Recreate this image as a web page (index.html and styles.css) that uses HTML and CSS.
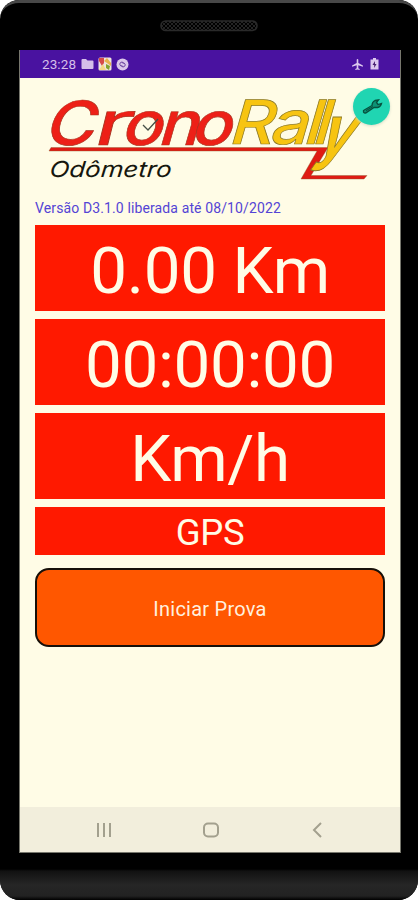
FILE: index.html
```
<!DOCTYPE html>
<html lang="pt-BR">
<head>
<meta charset="utf-8">
<title>CronoRally Odômetro</title>
<link rel="stylesheet" href="styles.css">
</head>
<body>
<div class="phone">
  <div class="top-bezel">
    <svg class="speaker" width="98" height="12" viewBox="0 0 98 12">
      <defs><pattern id="mesh" width="4" height="4" patternUnits="userSpaceOnUse"><path d="M0 0L4 4M4 0L0 4" stroke="#242424" stroke-width="1"/></pattern></defs>
      <rect x="1" y="1" width="96" height="9.5" rx="4.75" fill="url(#mesh)" stroke="#2a2a2a" stroke-width="1.6"/>
    </svg>
  </div>
  <div class="screen">
    <header class="status">
      <span class="clock">23:28</span>
      <svg class="folder" width="13" height="12" viewBox="0 0 13 12"><path d="M.5 2Q.5 1 1.5 1H5L6.500 2.500H11.500Q12.500 2.500 12.500 3.500V10Q12.500 11 11.500 11H1.500Q.5 11 .5 10Z" fill="#d5bfe9"/></svg>
      <svg class="photo" width="14" height="14" viewBox="0 0 14 14"><rect x=".5" y=".5" width="13" height="13" rx="1.500" fill="#eee4dd"/><path d="M1 1H6V6L4 9L1 4Z" fill="#d64a49"/><path d="M6 4L9 1L13 6V9L9 6Z" fill="#e8b24d"/><path d="M8 7L12 9L11 13L8 11Z" fill="#83a52d"/><path d="M1 13L5 7L8 13Z" fill="#f4d884"/></svg>
      <svg class="disc" width="13" height="13" viewBox="0 0 13 13"><circle cx="6.500" cy="6.500" r="6" fill="#dac6ea"/><path d="M6.500 8A2 2 0 1 1 7 4.500L8.500 6M6.500 5A2 2 0 1 1 6 8.500L4.500 7" fill="none" stroke="#68409e" stroke-width="1"/></svg>
      <svg class="plane" width="13" height="13" viewBox="0 0 24 24"><path d="M22 16v-2l-8.500-5V3.500a1.500 1.500 0 0 0-3 0V9L2 14v2l8.500-2.500V19L8 20.500V22l4-1 4 1v-1.500L13.500 19v-5.500z" fill="#dcc8ee"/></svg>
      <svg class="battery" width="9" height="12" viewBox="0 0 9 12"><path d="M3 0H6V1.500H8.500V11.500H.5V1.500H3Z" fill="#dcc8ee"/><path d="M5 3L2.500 7H4.200V10L6.500 6H5Z" fill="#482071"/></svg>
    </header>
    <main class="content">
      <div class="brand">
        <svg class="logo" width="350" height="112" viewBox="35 84 350 112">
          <path d="M51 147.500H328L311 175.500H367L364 179H301L317 151H49Z" fill="#df1b13" stroke="#8b5b31" stroke-width=".4"/>
          <g class="crono"><text transform="translate(0 144.500) skewX(-17) scale(1.120 1)" x="38">C</text><text class="narrow" transform="translate(91 144.500) skewX(-14) scale(1.650 1)">r</text><text transform="translate(0 144.500) skewX(-16) scale(1.120 1)" x="107 140 169">ono</text></g>
          <g class="rally"><text transform="translate(0 143.500) skewX(-16) scale(1.120 1)" x="203 239 269.500 277.500">Rall</text><text transform="translate(314 156) skewX(-25) scale(1.080 1.400)" class="tail">y</text></g>
          <path d="M143 125L148 130L158 119" fill="none" stroke="#455047" stroke-width="1.300"/>
          <text class="subtitle" transform="translate(49 177) skewX(-6)" textLength="122" lengthAdjust="spacingAndGlyphs">Odômetro</text>
        </svg>
        <button class="settings" aria-label="Configurações"><svg width="22" height="20" viewBox="0 0 22 20"><path d="M2.500 13.500L11 8.500Q11 5 14 3.500L17.500 3L15.500 5.500L17 7.500L20.500 6.500Q19.500 10 16.500 10.500L13 10.500L5 15.800Q3 16.500 2.500 15Z" fill="#0d9276" stroke="#07513f" stroke-width="1.300"/><path d="M5 13.700L12 9.500" stroke="#07513f"/></svg></button>
      </div>
      <p class="version">Versão D3.1.0 liberada até 08/10/2022</p>
      <section class="readings">
        <div class="reading">0.00 Km</div>
        <div class="reading">00:00:00</div>
        <div class="reading">Km/h</div>
        <div class="reading gps">GPS</div>
      </section>
      <button class="start">Iniciar Prova</button>
    </main>
    <nav class="navigation">
      <svg width="16" height="16" viewBox="0 0 16 16"><path d="M2 1V15M8 1V15M14 1V15"/></svg>
      <svg width="16" height="16" viewBox="0 0 16 16"><rect x="1" y="1.500" width="14" height="13" rx="4"/></svg>
      <svg width="16" height="16" viewBox="0 0 16 16"><path d="M11 1L4 8L11 15"/></svg>
    </nav>
  </div>
  <div class="bottom-bezel"></div>
</div>
</body>
</html>
```
FILE: styles.css
```
* { box-sizing: border-box; }
body { margin: 0; background: #fff; font-family: Roboto, sans-serif; }
button { font: inherit; padding: 0; }
.phone { width: 418px; height: 900px; display: flex; flex-direction: column; align-items: center; background: #000; border-radius: 19px 19px 20px 20px; overflow: hidden; }
.top-bezel { width: 100%; height: 50px; flex: none; display: flex; justify-content: center; padding-top: 19px; border-top: 3px solid #484848; border-radius: 19px 19px 0 0; }
.speaker { margin-top: -2px; }
.screen { width: 382px; height: 803px; flex: none; display: flex; flex-direction: column; margin-left: 2px; background: #fffce6; border: 1px solid #77776d; border-top: 0; }
.status { height: 28px; flex: none; display: flex; align-items: center; padding: 0 21px 0 22px; background: #4912a0; }
.clock { color: #d5bfe9; font-size: 13.500px; width: 39px; letter-spacing: .1px; }
.photo { margin-left: 4px; }
.disc { margin-left: 4px; }
.plane { margin-left: auto; margin-right: 6px; }
.content { display: flex; flex-direction: column; flex: 1; padding: 6px 15px 0; }
.brand { height: 112px; position: relative; flex: none; }
.logo { display: block; overflow: visible; }
.logo text { font-family: Inter, sans-serif; font-size: 61px; font-weight: 500; }
.crono { fill: #ed2017; stroke: #a93320; stroke-width: .6px; }
.rally { fill: #f7c411; stroke: #8c7925; stroke-width: .7px; }
.logo .narrow { font-weight: 400; }
.logo .tail { font-size: 51px; font-weight: 700; }
.logo .subtitle { font-size: 22px; font-style: italic; font-weight: 400; fill: #16170e; }
.settings { position: absolute; right: -5px; top: 4px; width: 37px; height: 37px; display: grid; place-items: center; border: 0; border-radius: 50%; background: #20d5b2; box-shadow: 0 1px 3px #d5dcc8; }
.version { margin: 2px 0 0; height: 27px; color: #5444d5; font-size: 14px; letter-spacing: .12px; line-height: 20px; white-space: nowrap; }
.readings { display: flex; flex-direction: column; gap: 8px; }
.reading { height: 86px; display: grid; place-items: center; background: #ff1900; color: #fffce6; font-size: 65.500px; line-height: 1; letter-spacing: -.3px; padding-top: 5px; }
.gps { height: 48px; font-size: 36.500px; padding-top: 4px; }
.start { height: 79px; margin-top: 13px; padding-top: 2px; background: #ff5700; color: #fff0df; border: 2px solid #171009; border-radius: 14px; font-size: 20px; letter-spacing: .25px; }
.navigation { height: 45px; flex: none; display: flex; justify-content: center; align-items: center; gap: 91px; padding-left: 1px; background: #f2eedc; }
.navigation svg { fill: none; stroke: #a3a08e; stroke-width: 2; }
.bottom-bezel { width: 100%; flex: 1; background: linear-gradient(#000 0 16px, #111 18px, #262626 32px, #222 43px, #000 47px); }
```
